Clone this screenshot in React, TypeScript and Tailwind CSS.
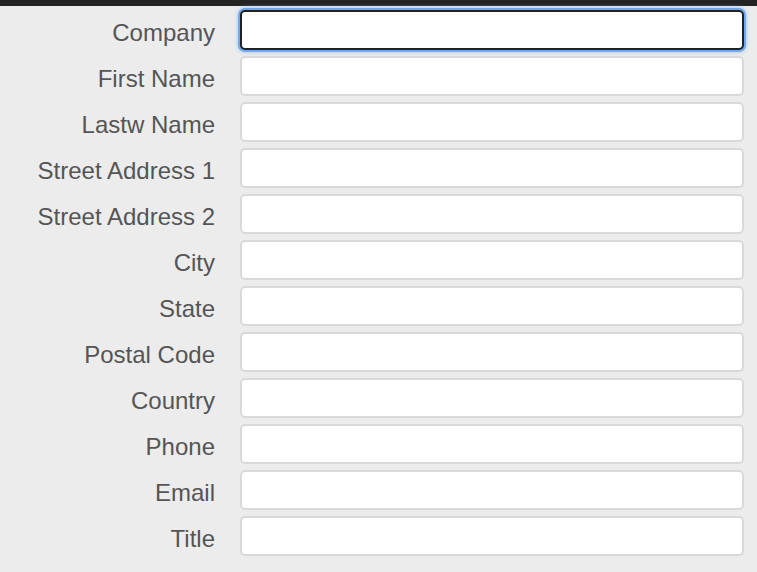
const fields = [
  "Company",
  "First Name",
  "Lastw Name",
  "Street Address 1",
  "Street Address 2",
  "City",
  "State",
  "Postal Code",
  "Country",
  "Phone",
  "Email",
  "Title",
];

export default function App() {
  return (
    <div className="w-[757px] h-[572px] bg-[#ececec] font-['Liberation_Sans',Arial,sans-serif]">
      <div className="h-[6px] bg-[#232323]" />
      <div className="grid grid-cols-[215px_1fr] gap-x-[25px] gap-y-[6px] pt-[4px] pr-[13px]">
        {fields.map((f, i) => (
          <div key={f} className="contents">
            <label className="flex items-center justify-end h-[40px] pt-[5px] text-[24px] text-[#555] whitespace-nowrap">
              {f}
            </label>
            <input
              type="text"
              className={
                i === 0
                  ? "h-[40px] bg-white rounded-[5px] border-2 border-[#222] shadow-[0_0_0_2px_#6ea8f0,0_0_4px_2px_#9cc4f5] outline-none"
                  : "h-[40px] bg-white rounded-[5px] border-2 border-[#d9d9d9] outline-none"
              }
            />
          </div>
        ))}
      </div>
    </div>
  );
}
